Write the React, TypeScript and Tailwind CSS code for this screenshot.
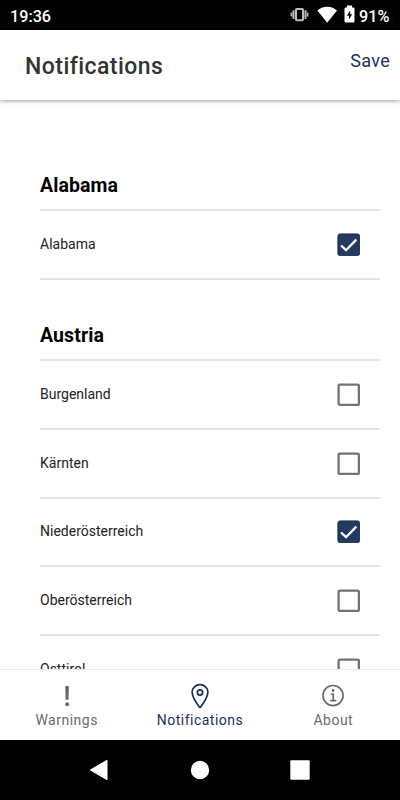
import React from "react";

type Region = { name: string; checked: boolean };

const sections: { title: string; head: string; regions: Region[] }[] = [
  {
    title: "Alabama",
    head: "h-[111px] pb-[11px]",
    regions: [{ name: "Alabama", checked: true }],
  },
  {
    title: "Austria",
    head: "h-[81.25px] pb-[11px]",
    regions: [
      { name: "Burgenland", checked: false },
      { name: "Kärnten", checked: false },
      { name: "Niederösterreich", checked: true },
      { name: "Oberösterreich", checked: false },
      { name: "Osttirol", checked: false },
    ],
  },
];

function Checkbox({ checked }: { checked: boolean }) {
  return (
    <svg className="mr-[20px] block h-[23px] w-[23px] shrink-0" viewBox="0 0 23 23" fill="none">
      {checked ? (
        <>
          <rect x="0.9" y="0.9" width="21.7" height="21.7" rx="2.2" fill="#233a5e" stroke="#14284b" strokeWidth="0.9" />
          <path d="M4.1 12.5 9 17.2 19.3 6.6" stroke="#fff" strokeWidth="2.3" />
        </>
      ) : (
        <rect x="1.6" y="1.6" width="20.3" height="20.3" rx="1.2" stroke="#727272" strokeWidth="2.3" />
      )}
    </svg>
  );
}

function StatusBar() {
  return (
    <div className="flex h-[30px] shrink-0 items-center bg-black pl-[10px] pr-[10px] text-white">
      <span className="mt-[3px] text-[16.2px] leading-[20px] font-medium">19:36</span>
      <svg className="ml-auto block h-[30px] w-[66px]" viewBox="290 0 66 30">
        <g stroke="#bdbdbd" fill="none">
          <rect x="296" y="9" width="7" height="11.2" rx="0.8" strokeWidth="2" />
          <path d="M293.5 10.3v8.6M305.5 10.3v8.6" strokeWidth="2" />
          <path d="M291.4 12.6v4M307.6 12.6v4" strokeWidth="1.6" />
        </g>
        <path d="M317.4 10.5Q321.2 6.7 327.2 6.7T337 10.5L327.2 22.7Z" fill="#fff" />
        <path d="M347 5.6h5v1.8h1.3q1.2 0 1.2 1.2V21.3q0 1.2-1.2 1.2h-7.6q-1.2 0-1.2-1.2V8.6q0-1.2 1.2-1.2H347Z" fill="#fff" />
        <path d="M350.2 10.4 346.9 15.8h2.1v3.6L352.2 14.2h-2Z" fill="#000" />
      </svg>
      <span className="mt-[3px] ml-[3px] w-[31px] text-[16.2px] leading-[20px] font-medium whitespace-nowrap">91%</span>
    </div>
  );
}

function TabBar() {
  const label = "text-[14px] leading-[18px] tracking-[0.5px] pt-px";
  return (
    <nav className="grid h-[71px] shrink-0 grid-cols-3 border-t border-[#e9e9e9] bg-white text-[#6a6a6a]">
      <div className="flex flex-col items-center pt-[12px]">
        <svg className="block h-[28px] w-[28px]" viewBox="0 0 28 28" fill="currentColor">
          <path d="M12.2 5q0-.9.9-.9h1.9q.9 0 .9.9l-.4 12.8h-2.9Z" />
          <circle cx="14.1" cy="22.3" r="2" />
        </svg>
        <span className={label}>Warnings</span>
      </div>
      <div className="flex flex-col items-center pt-[12px] text-[#1c3256]">
        <svg className="ml-px block h-[28px] w-[28px]" viewBox="0 0 512 512" fill="none" stroke="currentColor" strokeWidth="32" strokeLinecap="round" strokeLinejoin="round">
          <path d="M256 48c-79.5 0-144 61.39-144 137 0 87 96 224.87 131.25 272.49a15.77 15.77 0 0025.5 0C304 409.89 400 272.07 400 185c0-75.61-64.5-137-144-137z" />
          <circle cx="256" cy="192" r="48" />
        </svg>
        <span className={label}>Notifications</span>
      </div>
      <div className="flex flex-col items-center pt-[12px]">
        <svg className="block h-[28px] w-[28px]" viewBox="-8 0 512 512" fill="none" stroke="currentColor" strokeWidth="30" strokeLinecap="round" strokeLinejoin="round">
          <path d="M248 64C146.39 64 64 146.39 64 248s82.39 184 184 184 184-82.39 184-184S349.61 64 248 64z" />
          <path d="M220 220h32v116" />
          <path d="M208 340h88" />
          <path d="M248 130a26 26 0 1026 26 26 26 0 00-26-26z" fill="currentColor" stroke="none" />
        </svg>
        <span className={label}>About</span>
      </div>
    </nav>
  );
}

export default function App() {
  return (
    <div className="flex h-[800px] w-[400px] flex-col overflow-hidden bg-white font-[Roboto,sans-serif]">
      <StatusBar />
      <header className="relative z-10 flex h-[70px] shrink-0 items-center justify-between bg-white pr-[10px] pl-[25px] shadow-[0_1px_4px_rgba(0,0,0,0.4)]">
        <h1 className="mt-[3px] text-[23px] leading-[30px] font-medium tracking-[0.45px] text-[#333]">Notifications</h1>
        <span className="mb-[8px] text-[18px] leading-[24px] tracking-[0.3px] text-[#1c3256]">Save</span>
      </header>
      <main className="min-h-0 flex-1 overflow-hidden pr-[20px] pl-[40px]">
        {sections.map((section) => (
          <section key={section.title}>
            <h2 className={`flex items-end border-b-2 border-[#e4e4e4] text-[19.5px] leading-[24px] font-bold tracking-[0.1px] text-black ${section.head}`}>
              {section.title}
            </h2>
            {section.regions.map((region) => (
              <div key={region.name} className="flex h-[68.75px] items-center justify-between border-b-2 border-[#e4e4e4]">
                <span className="mb-px text-[14px] leading-[20px] text-[#222]">{region.name}</span>
                <Checkbox checked={region.checked} />
              </div>
            ))}
          </section>
        ))}
      </main>
      <TabBar />
      <div className="flex h-[60px] shrink-0 items-center justify-center bg-black">
        <svg className="block h-[60px] w-[400px]" viewBox="0 0 400 60" fill="#fff">
          <path d="M90.3 30 107 20.3v19.4Z" stroke="#fff" strokeWidth="1" strokeLinejoin="round" />
          <circle cx="200" cy="30" r="9.2" />
          <rect x="290.3" y="20.3" width="19.4" height="19.4" rx="1.2" />
        </svg>
      </div>
    </div>
  );
}
